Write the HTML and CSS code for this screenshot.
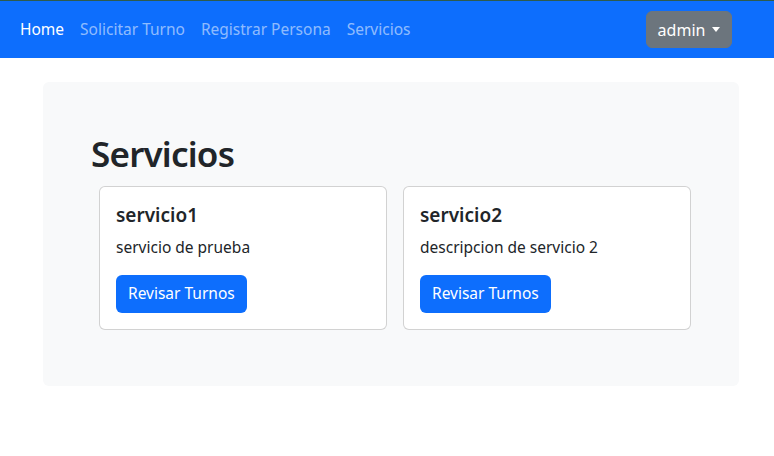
FILE: index.html
```html
<!DOCTYPE html>
<html lang="es">
<head>
<meta charset="utf-8">
<title>Servicios</title>
<link rel="stylesheet" href="styles.css">
</head>
<body>
<nav class="navbar">
  <ul class="nav-links">
    <li><a class="nav-link active" href="#">Home</a></li>
    <li><a class="nav-link" href="#">Solicitar Turno</a></li>
    <li><a class="nav-link" href="#">Registrar Persona</a></li>
    <li><a class="nav-link" href="#">Servicios</a></li>
  </ul>
  <button class="btn-user" type="button">admin<span class="caret"></span></button>
</nav>
<main class="container">
  <section class="panel">
    <h1 class="title">Servicios</h1>
    <div class="cards">
      <div class="card">
        <h5 class="card-title">servicio1</h5>
        <p class="card-text">servicio de prueba</p>
        <a class="btn-primary" href="#">Revisar Turnos</a>
      </div>
      <div class="card">
        <h5 class="card-title">servicio2</h5>
        <p class="card-text">descripcion de servicio 2</p>
        <a class="btn-primary" href="#">Revisar Turnos</a>
      </div>
    </div>
  </section>
</main>
</body>
</html>
```
FILE: styles.css
```css
* { box-sizing: border-box; }
html, body { margin: 0; padding: 0; }
body {
  font-family: "Noto Sans", "Open Sans", sans-serif;
  font-size: 16px;
  line-height: 1.5;
  color: #212529;
  background: #fff;
}
.navbar {
  height: 58px;
  border-top: 1px solid #2e5b4c;
  background: #0d6efd;
  display: flex;
  align-items: center;
  justify-content: space-between;
  padding: 0 42px 0 12px;
}
.nav-links {
  list-style: none;
  margin: 0;
  padding: 0;
  display: flex;
}
.nav-link {
  display: block;
  padding: 8px 8px;
  color: rgba(255,255,255,0.55);
  text-decoration: none;
  font-size: 15.5px;
}
.nav-link.active { color: #fff; }
.btn-user {
  font-family: inherit;
  font-size: 16px;
  line-height: 24px;
  height: 37px;
  width: 86px;
  padding: 0 12px;
  color: #fff;
  background: #6c757d;
  border: 1px solid #6c757d;
  border-radius: 6px;
  display: flex;
  align-items: center;
  justify-content: center;
}
.caret {
  display: inline-block;
  margin-left: 7px;
  width: 0;
  height: 0;
  border-top: 5px solid #fff;
  border-left: 4.5px solid transparent;
  border-right: 4.5px solid transparent;
}
.container {
  padding: 24px 35px 0 43px;
}
.panel {
  background: #f8f9fa;
  border-radius: 6px;
  padding: 48px 48px 56px 48px;
}
.title {
  margin: 0 0 8px;
  font-size: 35px;
  font-weight: 600;
  letter-spacing: -0.8px;
  line-height: 48px;
}
.cards {
  display: flex;
  gap: 16px;
  padding-left: 8px;
}
.card {
  flex: 1;
  background: #fff;
  border: 1px solid rgba(0,0,0,0.175);
  border-radius: 6px;
  padding: 16px;
}
.card-title {
  margin: 0 0 8px;
  font-size: 19px;
  font-weight: 600;
  line-height: 24px;
}
.card-text {
  margin: 0 0 16px;
  font-size: 15.5px;
  line-height: 24px;
}
.btn-primary {
  display: inline-block;
  height: 38px;
  padding: 6px 12px;
  color: #fff;
  background: #0d6efd;
  border-radius: 6px;
  text-decoration: none;
  font-size: 15.5px;
  line-height: 24px;
}
```
